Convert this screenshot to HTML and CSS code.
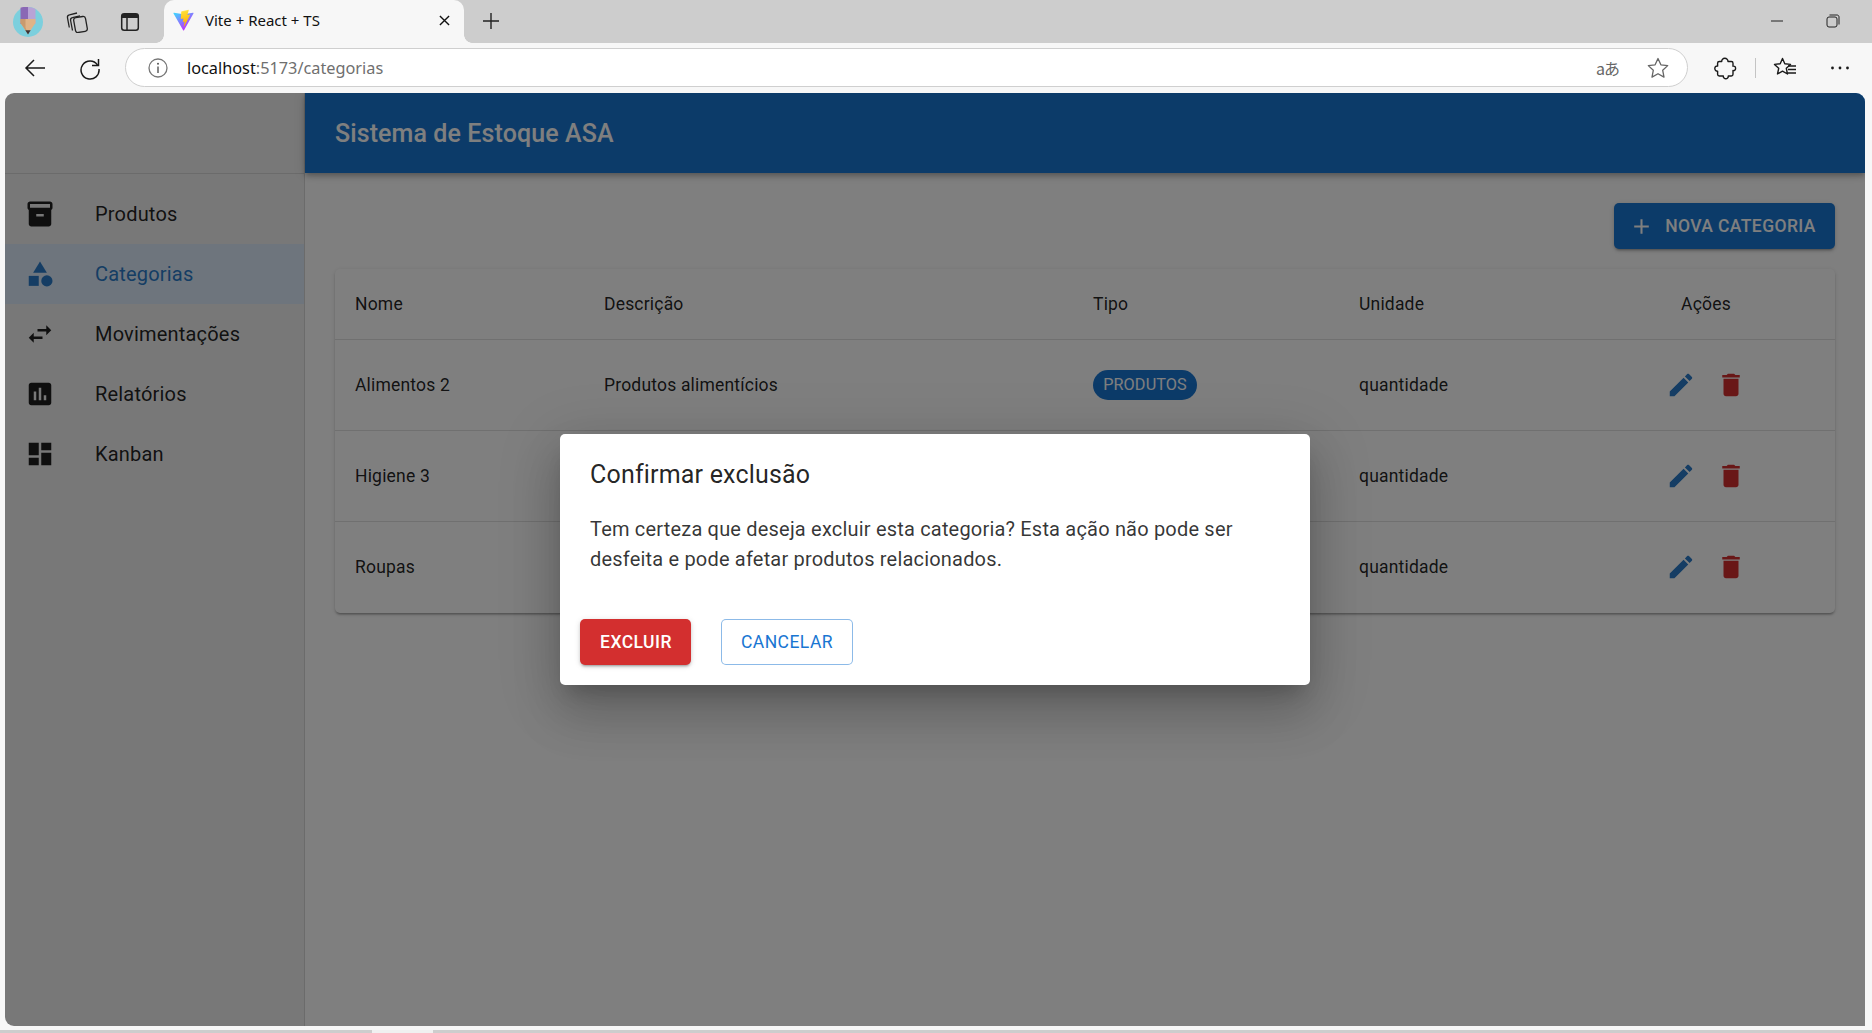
FILE: index.html
```html
<!DOCTYPE html>
<html lang="pt-BR">
<head>
<meta charset="utf-8">
<title>Vite + React + TS</title>
<link rel="stylesheet" href="styles.css">
</head>
<body>
<div class="browser">
  <div class="tabstrip">
    <div class="strip-left">
      <svg class="avatar" viewBox="0 0 30 30"><circle cx="15" cy="15" r="15" fill="#7ccfdd"/><path d="M7.500 0.800A15 15 0 0 1 15 0V17H7.500Z" fill="#8a68b5"/><path d="M15 0A15 15 0 0 1 22.500 2V17H15Z" fill="#b8a3d6"/><path d="M7.500 12H22.500V16L15 27L7.500 16Z" fill="#dfb387"/><path d="M7.500 12H12.500V20.500L15 27L7.500 16Z" fill="#c99a6e"/><path d="M12.300 23.300H17.700L15 27.500Z" fill="#3c3436"/></svg>
      <svg class="strip-icon" viewBox="0 0 22 22"><g fill="none" stroke="#222" stroke-width="1.300" stroke-linejoin="round"><rect x="8.500" y="6" width="12" height="15" rx="2.500" transform="rotate(-10 14.500 13.500)"/><path d="M6.500 19.500 4.600 9.500C4.300 8 5 7 6.400 6.700L14 4.800"/><path d="M3.300 16.500 1.500 6.800C1.200 5.300 2 4.200 3.400 3.900L11 2"/></g></svg>
      <svg class="strip-icon" viewBox="0 0 22 22"><rect x="2.700" y="2.700" width="16.600" height="16.600" rx="2.500" fill="none" stroke="#222" stroke-width="1.500"/><path d="M3 3h16v4H3z" fill="#222"/><path d="M8 7v12" stroke="#222" stroke-width="1.500"/></svg>
    </div>
    <div class="tab">
      <svg class="favicon" viewBox="0 0 32 32"><defs><linearGradient id="vg1" x1="6" y1="5" x2="20" y2="27" gradientUnits="userSpaceOnUse"><stop offset="0" stop-color="#41d1ff"/><stop offset="1" stop-color="#bd34fe"/></linearGradient><linearGradient id="vg2" x1="15" y1="2" x2="20" y2="24" gradientUnits="userSpaceOnUse"><stop offset="0" stop-color="#ffea83"/><stop offset=".1" stop-color="#ffdd35"/><stop offset="1" stop-color="#ffa800"/></linearGradient></defs><path d="M29.880 6.150 16.740 29.650c-.27.480-.97.490-1.240 0L2.100 6.150c-.3-.530.150-1.160.750-1.060l13.150 2.350a.71.710 0 0 0 .250 0l12.880-2.350c.6-.110 1.050.520.750 1.060z" fill="url(#vg1)"/><path d="M22.900 1.100 13.200 3a.36.36 0 0 0-.29.330l-.6 10.100a.36.36 0 0 0 .44.370l2.700-.62a.36.360 0 0 1 .43.420l-.8 3.920a.36.36 0 0 0 .46.42l1.670-.5a.36.36 0 0 1 .46.42l-1.270 6.170c-.08.380.43.600.65.270l.15-.22 7.900-15.760c.13-.26-.1-.56-.39-.5l-2.780.53a.36.36 0 0 1-.41-.45l1.800-6.300a.36.36 0 0 0-.42-.45z" fill="url(#vg2)"/></svg>
      <span class="tab-title">Vite + React + TS</span>
      <svg class="tab-close" viewBox="0 0 12 12"><path d="M1 1l10 10M11 1L1 11" stroke="#111" stroke-width="1.500"/></svg>
    </div>
    <svg class="new-tab" viewBox="0 0 18 18"><path d="M9 1v16M1 9h16" stroke="#222" stroke-width="1.400"/></svg>
    <div class="window-controls">
      <svg class="win-icon" viewBox="0 0 14 14"><path d="M1 7h12" stroke="#222" stroke-width="1"/></svg>
      <svg class="win-icon" viewBox="0 0 14 14"><rect x="1" y="3" width="10" height="10" rx="2" fill="none" stroke="#222" stroke-width="1"/><path d="M3.500 1H11c1.200 0 2 .8 2 2v7.500" fill="none" stroke="#222" stroke-width="1"/></svg>
    </div>
  </div>
  <div class="toolbar">
    <svg class="nav-btn" viewBox="0 0 24 24"><path d="M22 12H3M11 4l-8 8 8 8" fill="none" stroke="#1a1a1a" stroke-width="1.500"/></svg>
    <svg class="nav-btn reload" viewBox="0 0 24 24"><path d="M19.500 9A9 9 0 1 0 21 13" fill="none" stroke="#1a1a1a" stroke-width="1.500"/><path d="M20.500 3v6.500H14" fill="none" stroke="#1a1a1a" stroke-width="1.500"/></svg>
    <div class="address">
      <svg class="info" viewBox="0 0 20 20"><circle cx="10" cy="10" r="9" fill="none" stroke="#777" stroke-width="1.300"/><path d="M10 8.500V15" stroke="#555" stroke-width="1.400"/><circle cx="10" cy="5.800" r="1" fill="#555"/></svg>
      <span class="url"><span class="url-host">localhost</span>:5173/categorias</span>
      <span class="translate">aあ</span>
      <svg class="star" viewBox="0 0 24 24"><path d="M12 2.500l2.900 6.300 6.800.8-5 4.700 1.300 6.800-6-3.400-6 3.400 1.300-6.800-5-4.700 6.800-.8z" fill="none" stroke="#666" stroke-width="1.300" stroke-linejoin="round"/></svg>
    </div>
    <svg class="tool extensions" viewBox="0 0 24 24"><path d="M8.700 5.500C8.600 3.500 10 2.300 11.800 2.300s3.300 1.200 3.200 3.200h3.300c1 0 1.700.7 1.700 1.700v3c1.500-.5 2.600.8 2.600 2.200s-1.100 2.500-2.600 2.100v3.800c0 1-.7 1.700-1.700 1.700h-3c.2 1.700-1.200 2.700-2.500 2.700s-2.700-1-2.500-2.700H6.300c-1 0-1.700-.7-1.700-1.700v-3.200C3 15.300 1.800 14 1.800 12.500s1.200-2.800 2.800-2.500V7.200c0-1 .7-1.700 1.700-1.700z" fill="none" stroke="#1a1a1a" stroke-width="1.400" stroke-linejoin="round"/></svg>
    <span class="tool-sep"></span>
    <svg class="tool favorites" viewBox="0 0 24 24"><path d="M9.500 2.500l2.300 5.300 5.700.6-4.200 3.900 1.200 5.700-5-2.900-5 2.900 1.200-5.700L1.500 8.400l5.700-.6z" fill="none" stroke="#1a1a1a" stroke-width="1.400" stroke-linejoin="round"/><path d="M15 10h8M15 13.500h8M15 17h8" stroke="#1a1a1a" stroke-width="1.300"/></svg>
    <svg class="tool more" viewBox="0 0 24 24"><circle cx="4.500" cy="12" r="1.400" fill="#1a1a1a"/><circle cx="12" cy="12" r="1.400" fill="#1a1a1a"/><circle cx="19.500" cy="12" r="1.400" fill="#1a1a1a"/></svg>
  </div>
  <div class="viewport">
    <div class="app">
      <aside class="sidebar">
        <div class="sidebar-head"></div>
        <nav class="menu">
          <div class="menu-item"><svg class="icon30" viewBox="0 0 24 24"><path d="M20 2H4c-1 0-2 .9-2 2v3.010c0 .72.43 1.340 1 1.690V20c0 1.100 1.100 2 2 2h14c.9 0 2-.9 2-2V8.700c.57-.35 1-.97 1-1.690V4c0-1.100-1-2-2-2zm-5 12H9v-2h6v2zm5-7H4V4l16-.02V7z"/></svg><span>Produtos</span></div>
          <div class="menu-item active"><svg class="icon30" viewBox="0 0 24 24"><path d="M12 2l-5.500 9h11z"/><circle cx="17.500" cy="17.500" r="4.500"/><path d="M3 13.500h8v8H3z"/></svg><span>Categorias</span></div>
          <div class="menu-item"><svg class="icon30" viewBox="0 0 24 24"><path d="M6.990 11L3 15l3.990 4v-3H14v-2H6.990v-3zM21 9l-3.990-4v3H10v2h7.010v3L21 9z"/></svg><span>Movimentações</span></div>
          <div class="menu-item"><svg class="icon30" viewBox="0 0 24 24"><path d="M19 3H5c-1.100 0-2 .9-2 2v14c0 1.100.9 2 2 2h14c1.100 0 2-.9 2-2V5c0-1.100-.9-2-2-2zM9 17H7v-7h2v7zm4 0h-2V7h2v10zm4 0h-2v-4h2v4z"/></svg><span>Relatórios</span></div>
          <div class="menu-item"><svg class="icon30" viewBox="0 0 24 24"><path d="M3 13h8V3H3v10zm0 8h8v-6H3v6zm10 0h8V11h-8v10zm0-18v6h8V3h-8z"/></svg><span>Kanban</span></div>
        </nav>
      </aside>
      <div class="content">
        <header class="appbar">Sistema de Estoque ASA</header>
        <main class="main">
          <div class="actions-top">
            <button class="btn-primary"><svg class="icon-add" viewBox="0 0 24 24"><path d="M19 13h-6v6h-2v-6H5v-2h6V5h2v6h6v2z"/></svg>NOVA CATEGORIA</button>
          </div>
          <div class="card">
            <table class="table">
              <colgroup><col class="c1"><col class="c2"><col class="c3"><col class="c4"><col class="c5"></colgroup>
              <thead>
                <tr><th>Nome</th><th>Descrição</th><th>Tipo</th><th>Unidade</th><th class="center">Ações</th></tr>
              </thead>
              <tbody>
                <tr><td>Alimentos 2</td><td>Produtos alimentícios</td><td><span class="chip">PRODUTOS</span></td><td>quantidade</td><td><div class="row-actions"><svg class="icon30 edit" viewBox="0 0 24 24"><path d="M3 17.250V21h3.750L17.810 9.940l-3.750-3.750L3 17.250zM20.710 7.040c.39-.39.39-1.020 0-1.410l-2.340-2.340c-.39-.39-1.020-.39-1.410 0l-1.830 1.830 3.750 3.750 1.830-1.830z"/></svg><svg class="icon30 del" viewBox="0 0 24 24"><path d="M6 19c0 1.100.9 2 2 2h8c1.100 0 2-.9 2-2V7H6v12zM19 4h-3.500l-1-1h-5l-1 1H5v2h14V4z"/></svg></div></td></tr>
                <tr><td>Higiene 3</td><td></td><td></td><td>quantidade</td><td><div class="row-actions"><svg class="icon30 edit" viewBox="0 0 24 24"><path d="M3 17.250V21h3.750L17.810 9.940l-3.750-3.750L3 17.250zM20.710 7.040c.39-.39.39-1.020 0-1.410l-2.340-2.340c-.39-.39-1.020-.39-1.410 0l-1.830 1.830 3.750 3.750 1.830-1.830z"/></svg><svg class="icon30 del" viewBox="0 0 24 24"><path d="M6 19c0 1.100.9 2 2 2h8c1.100 0 2-.9 2-2V7H6v12zM19 4h-3.500l-1-1h-5l-1 1H5v2h14V4z"/></svg></div></td></tr>
                <tr><td>Roupas</td><td></td><td></td><td>quantidade</td><td><div class="row-actions"><svg class="icon30 edit" viewBox="0 0 24 24"><path d="M3 17.250V21h3.750L17.810 9.940l-3.750-3.750L3 17.250zM20.710 7.040c.39-.39.39-1.020 0-1.410l-2.340-2.340c-.39-.39-1.020-.39-1.410 0l-1.830 1.830 3.750 3.750 1.830-1.830z"/></svg><svg class="icon30 del" viewBox="0 0 24 24"><path d="M6 19c0 1.100.9 2 2 2h8c1.100 0 2-.9 2-2V7H6v12zM19 4h-3.500l-1-1h-5l-1 1H5v2h14V4z"/></svg></div></td></tr>
              </tbody>
            </table>
          </div>
        </main>
      </div>
      <div class="backdrop">
        <div class="dialog">
          <h2 class="dialog-title">Confirmar exclusão</h2>
          <p class="dialog-text">Tem certeza que deseja excluir esta categoria? Esta ação não pode ser desfeita e pode afetar produtos relacionados.</p>
          <div class="dialog-actions">
            <button class="btn-danger">EXCLUIR</button>
            <button class="btn-outline">CANCELAR</button>
          </div>
        </div>
      </div>
    </div>
  </div>
  <div class="bottom-strip"><span class="strip-a"></span><span class="strip-b"></span><span class="strip-c"></span></div>
</div>
</body>
</html>
```

FILE: styles.css
```css
* { box-sizing: border-box; }
html, body { margin: 0; height: 100%; overflow: hidden; }
body { font-family: Roboto, "Noto Sans", sans-serif; background: #f7f7f7; }
.browser { width: 1872px; height: 1033px; display: flex; flex-direction: column; }

/* Tab strip */
.tabstrip { height: 43px; background: #cdcdcd; display: flex; align-items: center; flex: none; }
.strip-left { width: 164px; display: flex; align-items: center; padding-left: 13px; }
.avatar { width: 30px; height: 30px; flex: none; }
.strip-icon { width: 22px; height: 22px; margin-left: 23px; flex: none; }
.strip-icon + .strip-icon { margin-left: 31px; }
.tab { width: 300px; height: 43px; background: #f7f7f7; border-radius: 10px 10px 0 0; display: flex; align-items: center; padding: 0 14px 3px 8px; position: relative; }
.tab::before, .tab::after { content: ""; position: absolute; bottom: 0; width: 8px; height: 8px; background: radial-gradient(circle at 0 0, transparent 7.5px, #f7f7f7 8px); }
.tab::before { left: -8px; }
.tab::after { right: -8px; background: radial-gradient(circle at 100% 0, transparent 7.500px, #f7f7f7 8px); }
.favicon { width: 23px; height: 23px; flex: none; }
.tab-title { margin-left: 10px; font-family: "Noto Sans", sans-serif; font-size: 15px; color: #111; flex: 1; white-space: nowrap; }
.tab-close { width: 11px; height: 11px; flex: none; margin-right: 0; }
.new-tab { width: 18px; height: 18px; margin-left: 18px; margin-top: -2px; }
.window-controls { margin-left: auto; display: flex; align-items: center; gap: 42px; padding-right: 32px; margin-top: -2px; }
.win-icon { width: 14px; height: 14px; }

/* Toolbar */
.toolbar { height: 50px; background: #f7f7f7; display: flex; align-items: center; flex: none; padding-left: 23px; padding-bottom: 1px; }
.nav-btn { width: 24px; height: 24px; flex: none; }
.reload { margin-left: 31px; }
.address { margin-left: 23px; width: 1563px; height: 39px; background: #fff; border: 1px solid #cfcfcf; border-radius: 20px; display: flex; align-items: center; padding: 0 17px 0 22px; flex: none; }
.info { width: 20px; height: 20px; flex: none; }
.url { margin-left: 19px; font-family: "Noto Sans", sans-serif; font-size: 16.3px; color: #6f6f6f; flex: 1; }
.url-host { color: #111; }
.translate { font-family: "Noto Sans CJK JP", "Noto Sans", sans-serif; font-size: 16px; color: #666; margin-right: 27px; letter-spacing: -1px; }
.star { width: 24px; height: 24px; flex: none; }
.tool { width: 24px; height: 24px; flex: none; }
.extensions { margin-left: 25px; }
.tool-sep { width: 1px; height: 20px; background: #c4c4c4; margin-left: 18px; }
.favorites { margin-left: 17px; }
.more { margin-left: 31px; }

/* Viewport */
.viewport { flex: 1; padding: 0 7px 4px 5px; min-height: 0; }
.app { height: 100%; display: flex; position: relative; border-radius: 9px 9px 0 9px; overflow: hidden; background: #fff; }
.bottom-strip { height: 3px; display: flex; flex: none; }
.strip-a { width: 372px; background: #cdcdcd; }
.strip-b { width: 61px; background: #f0f0f0; }
.strip-c { flex: 1; background: #cdcdcd; }

/* Sidebar */
.sidebar { width: 300px; background: #f0f0f0; border-right: 1px solid #d6d6d6; flex: none; }
.sidebar-head { height: 81px; border-bottom: 1px solid #d6d6d6; }
.menu { padding-top: 10px; }
.menu-item { height: 60px; display: flex; align-items: center; padding-left: 20px; font-size: 20px; letter-spacing: .19px; color: rgba(0, 0, 0, .87); }
.menu-item .icon30 { margin-right: 40px; fill: rgba(0, 0, 0, .87); }
.menu-item.active { background: #dcebfb; color: #2a7bc8; }
.menu-item.active .icon30 { fill: #2a7bc8; }
.icon30 { width: 30px; height: 30px; flex: none; display: block; }

/* Content */
.content { flex: 1; display: flex; flex-direction: column; min-width: 0; background: #fff; }
.appbar { height: 80px; background: #1976d2; color: #fff; font-size: 25px; font-weight: 500; letter-spacing: .1px; display: flex; align-items: center; padding-left: 30px; flex: none; box-shadow: 0 2px 5px -1px rgba(0,0,0,.2), 0 4px 6px rgba(0,0,0,.14), 0 1px 12px rgba(0,0,0,.12); position: relative; }
.main { padding: 30px; }
.actions-top { display: flex; justify-content: flex-end; margin-bottom: 20px; }
.btn-primary { height: 46px; width: 221px; background: #1976d2; color: #fff; border: 0; border-radius: 5px; font: 500 17.5px Roboto, sans-serif; letter-spacing: .4px; display: flex; align-items: center; justify-content: center; box-shadow: 0 3px 2px -2px rgba(0,0,0,.2), 0 2px 3px rgba(0,0,0,.14), 0 1px 6px rgba(0,0,0,.12); }
.icon-add { width: 25px; height: 25px; fill: #fff; margin-right: 11px; margin-left: -4px; }
.card { background: #fff; border-radius: 5px; box-shadow: 0 3px 2px -2px rgba(0,0,0,.2), 0 2px 2px rgba(0,0,0,.14), 0 1px 5px rgba(0,0,0,.12); overflow: hidden; }
.table { width: 100%; border-collapse: collapse; table-layout: fixed; font-size: 17.5px; letter-spacing: .19px; color: rgba(0, 0, 0, .87); }
.c1 { width: 249px; } .c2 { width: 489px; } .c3 { width: 266px; } .c4 { width: 238px; } .c5 { width: 258px; }
th { height: 70px; font-weight: 400; text-align: left; padding: 0 20px; border-bottom: 1px solid #e0e0e0; }
th.center { text-align: center; }
td { height: 91px; padding: 0 20px; border-bottom: 1px solid #e0e0e0; }
tbody tr:last-child td { border-bottom: 0; height: 92px; }
.chip { display: inline-flex; align-items: center; height: 30px; width: 104px; justify-content: center; border-radius: 15px; background: #1976d2; color: #fff; font-size: 16.25px; letter-spacing: .1px; vertical-align: middle; }
.row-actions { display: flex; justify-content: center; gap: 20px; }
.edit { fill: #2a7bc8; }
.del { fill: #d32f2f; }

/* Dialog */
.backdrop { position: absolute; inset: 0; background: rgba(0, 0, 0, .5); display: flex; align-items: center; justify-content: center; }
.dialog { width: 750px; height: 251px; background: #fff; border-radius: 5px; box-shadow: 0 14px 19px -9px rgba(0,0,0,.2), 0 30px 48px 3px rgba(0,0,0,.14), 0 11px 58px 10px rgba(0,0,0,.12); color: rgba(0, 0, 0, .87); }
.dialog-title { margin: 0; padding: 21px 30px 19px; font-size: 25px; font-weight: 400; line-height: 40px; letter-spacing: .19px; }
.dialog-text { margin: 0; padding: 0 30px 25px; font-size: 20px; line-height: 30px; letter-spacing: .19px; color: rgba(0, 0, 0, .8); }
.dialog-actions { padding: 20px; display: flex; gap: 30px; }
.btn-danger, .btn-outline { height: 46px; border-radius: 5px; font: 500 17.5px Roboto, sans-serif; letter-spacing: .45px; }
.btn-danger { width: 111px; background: #d32f2f; color: #fff; border: 0; padding-left: 7px; box-shadow: 0 3px 2px -2px rgba(0,0,0,.2), 0 2px 3px rgba(0,0,0,.14), 0 1px 6px rgba(0,0,0,.12); }
.btn-outline { width: 132px; background: #fff; color: #1976d2; border: 1px solid rgba(25, 118, 210, .5); font-weight: 400; }
```
